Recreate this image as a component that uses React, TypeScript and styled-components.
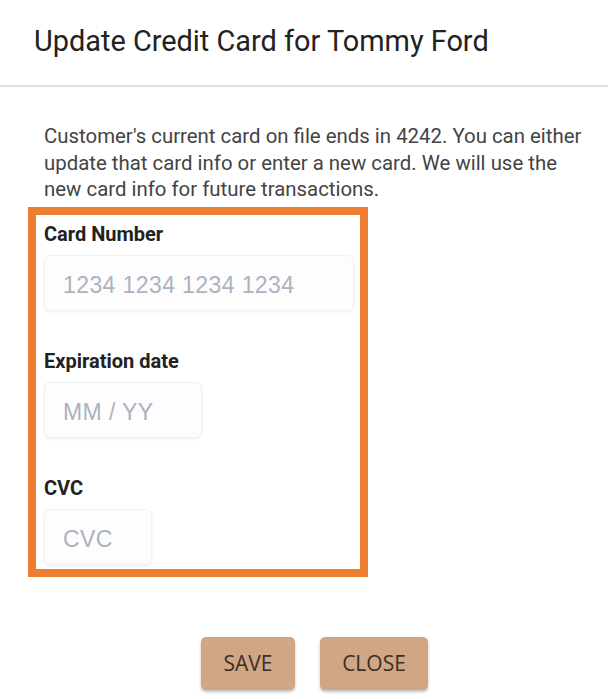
import styled, { createGlobalStyle } from 'styled-components';

const GlobalStyle = createGlobalStyle`
  body {
    margin: 0;
    background: #ffffff;
    font-family: Roboto, "Liberation Sans", sans-serif;
  }
`;

const Modal = styled.div`
  width: 608px;
  height: 699px;
  background: #ffffff;
  overflow: hidden;
`;

const Header = styled.div`
  height: 87px;
  padding-left: 34px;
  display: flex;
  align-items: center;
  border-bottom: 2px solid #e0e0e0;
  box-sizing: border-box;
  padding-bottom: 3px;
`;

const Title = styled.h2`
  margin: 0;
  font-family: Roboto, sans-serif;
  font-weight: 400;
  font-size: 28.9px;
  color: #222222;
`;

const Body = styled.div`
  padding: 36px 0 0 44px;
`;

const Intro = styled.p`
  margin: 0;
  width: 546px;
  font-size: 20.4px;
  line-height: 26.5px;
  color: #444444;
`;

const CardBox = styled.div`
  margin: 4px 0 0 -16px;
  width: 340px;
  height: 370px;
  box-sizing: border-box;
  border: 8px solid #ed7d31;
  padding: 9px 0 0 8px;
  overflow: hidden;
`;

const Field = styled.div`
  margin-bottom: 40px;
`;

const Label = styled.div`
  font-size: 20px;
  font-weight: 700;
  line-height: 20px;
  color: #222222;
  margin-bottom: 11px;
`;

const Input = styled.div<{ $width: number }>`
  width: ${(p) => p.$width}px;
  height: 56px;
  box-sizing: border-box;
  border: 1px solid #f1f1f3;
  border-radius: 6px;
  background: #fdfdfe;
  box-shadow: 0 1px 3px rgba(0, 0, 0, 0.06);
  display: flex;
  align-items: center;
  padding: 6px 0 0 18px;
  font-family: "Liberation Sans", Arial, sans-serif;
  font-size: 23px;
  letter-spacing: 0.4px;
  color: #aab3bf;
  white-space: nowrap;
`;

const Actions = styled.div`
  display: flex;
  justify-content: center;
  gap: 25px;
  margin-top: 60px;
  padding-left: 21px;
`;

const Button = styled.button<{ $width: number }>`
  width: ${(p) => p.$width}px;
  height: 53px;
  border: none;
  border-radius: 5px;
  background: #d0a684;
  box-shadow: 0 2px 3px rgba(0, 0, 0, 0.25);
  font-family: "Open Sans", sans-serif;
  font-size: 21px;
  color: #3b2f26;
  cursor: pointer;
`;

export default function App() {
  return (
    <>
      <GlobalStyle />
      <Modal>
        <Header>
          <Title>Update Credit Card for Tommy Ford</Title>
        </Header>
        <Body>
          <Intro>
            Customer's current card on file ends in 4242. You can either update that card info or
            enter a new card. We will use the new card info for future transactions.
          </Intro>
          <CardBox>
            <Field>
              <Label>Card Number</Label>
              <Input $width={310}>1234 1234 1234 1234</Input>
            </Field>
            <Field>
              <Label>Expiration date</Label>
              <Input $width={158}>MM / YY</Input>
            </Field>
            <Field>
              <Label>CVC</Label>
              <Input $width={108}>CVC</Input>
            </Field>
          </CardBox>
        </Body>
        <Actions>
          <Button $width={94}>SAVE</Button>
          <Button $width={108}>CLOSE</Button>
        </Actions>
      </Modal>
    </>
  );
}
